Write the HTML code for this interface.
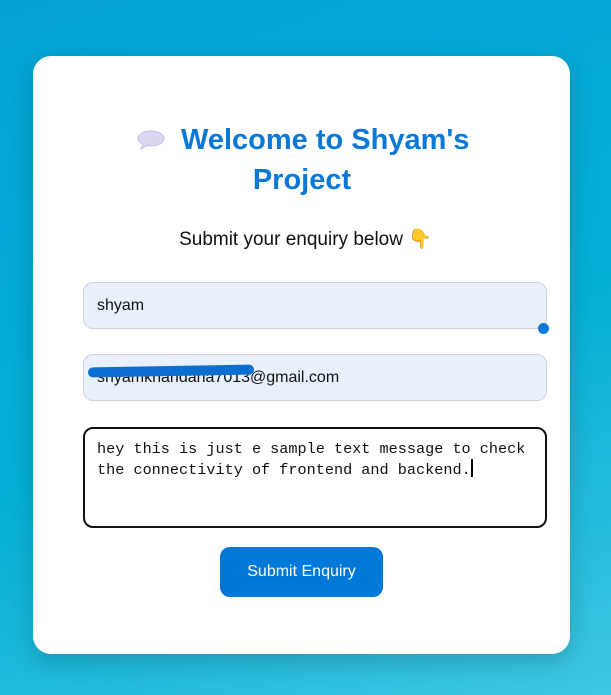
<!DOCTYPE html>
<html><head><meta charset="utf-8"><style>
*{margin:0;padding:0;box-sizing:border-box}
html,body{width:611px;height:695px;overflow:hidden}
body{background:linear-gradient(160deg,#03a2d6 0%,#04afd6 55%,#3fc6e2 100%);font-family:"Liberation Sans",sans-serif;position:relative}
.card{position:absolute;left:33px;top:56px;width:537px;height:598px;background:#fff;border-radius:18px;box-shadow:0 8px 24px rgba(0,0,0,0.18)}
.t{position:absolute;color:#0a78d6;font-weight:bold;font-size:29px;line-height:40px;white-space:nowrap}
.sub{position:absolute;left:0;width:611px;text-align:center;top:227px;font-size:19px;color:#111}
.in{position:absolute;left:83px;width:464px;height:47px;background:#e8f0fe;border:1px solid #cfd4dc;border-radius:10px;font-size:16px;color:#111;padding-left:13px;line-height:45px}
.ta{position:absolute;left:83px;top:427px;width:464px;height:101px;border:2px solid #111;border-radius:10px;font-family:"Liberation Mono",monospace;font-size:15.2px;line-height:19px;padding:11px 12px;color:#111}
.btn{position:absolute;left:220px;top:547px;width:163px;height:50px;background:#0078d7;border-radius:10px;color:#fff;font-size:16px;text-align:center;line-height:50px}
</style></head><body>
<div class="card"></div>
<svg style="position:absolute;left:136px;top:129px" width="32" height="24" viewBox="0 0 32 24"><path d="M15 2C7 2 2 5.5 2 9.5c0 2.5 2 4.5 5 5.8L5 20l6-3.5c1.3.3 2.6.4 4 .4 8 0 13-3.5 13-7.4S23 2 15 2z" fill="#ddd6f2" stroke="#c8bfe6" stroke-width="1"/></svg>
<div class="t" style="left:181px;top:120px">Welcome to Shyam's</div>
<div class="t" style="left:0;width:604px;text-align:center;top:160px">Project</div>
<div class="sub">Submit your enquiry below <span style="color:#f5a623">👇</span></div>
<div class="in" style="top:282px">shyam</div>
<div style="position:absolute;left:538px;top:323px;width:11px;height:11px;border-radius:50%;background:#0a78d6"></div>
<div class="in" style="top:354px">shyamkhandana7013@gmail.com</div>
<div style="position:absolute;left:88px;top:366px;width:166px;height:10px;border-radius:5px;background:#0a6fd0;transform:rotate(-1deg)"></div>
<div class="ta">hey this is just e sample text message to check<br>the connectivity of frontend and backend.<span style="display:inline-block;width:2px;height:18px;background:#000;vertical-align:-3px"></span></div>
<div class="btn">Submit Enquiry</div>
</body></html>
